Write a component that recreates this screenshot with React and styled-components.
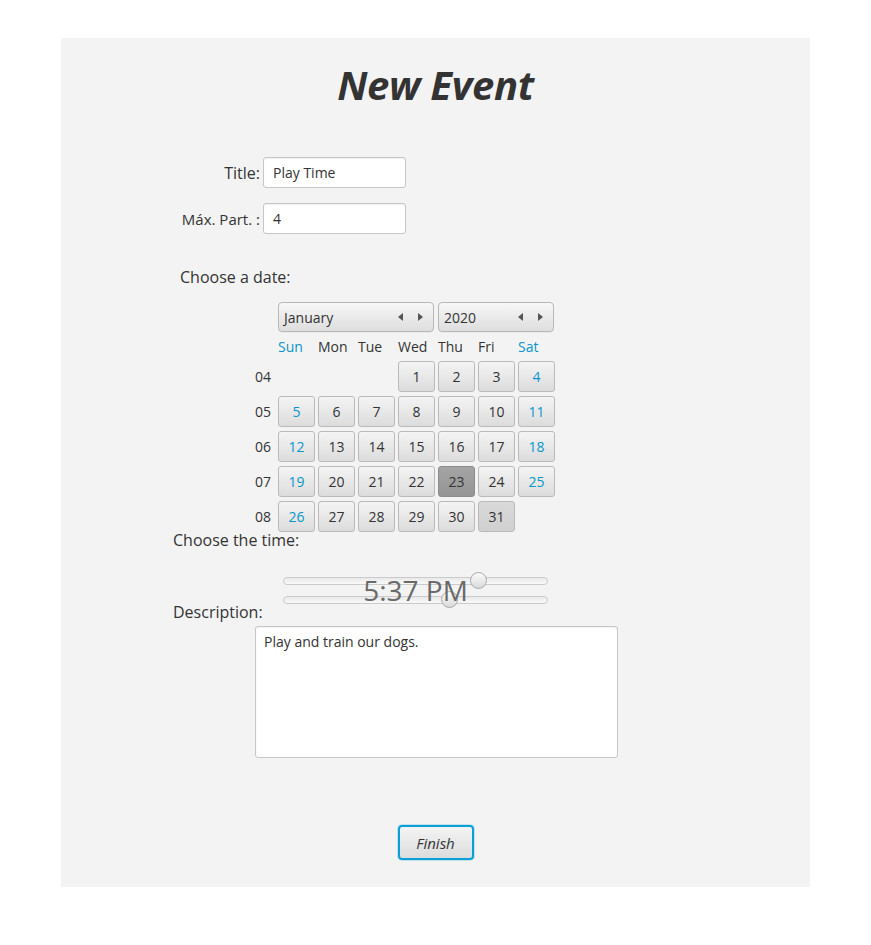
import React from "react";
import styled, { createGlobalStyle } from "styled-components";

const Global = createGlobalStyle`
  html, body { margin: 0; padding: 0; background: #ffffff; }
  body { font-family: "Open Sans", "Noto Sans", sans-serif; color: #333333; }
  * { box-sizing: border-box; }
`;

const Panel = styled.div`
  margin: 38px 0 0 61px;
  width: 749px;
  height: 849px;
  background: #f3f3f3;
  display: flex;
  flex-direction: column;
  align-items: flex-start;
`;

const Heading = styled.h1`
  align-self: stretch;
  margin: 22px 0 0;
  height: 50px;
  line-height: 50px;
  text-align: center;
  font-size: 40px;
  font-weight: 700;
  font-style: italic;
  color: #333333;
  letter-spacing: -0.3px;
`;

const FieldGrid = styled.div`
  margin-top: 47px;
  display: grid;
  grid-template-columns: 199px 143px;
  column-gap: 3px;
  row-gap: 15px;
  align-items: center;
`;

const FieldLabel = styled.label`
  text-align: right;
  font-size: ${(p) => p.$size || 16}px;
  color: #333333;
  white-space: nowrap;
`;

const TextInput = styled.div`
  height: 31px;
  background: #ffffff;
  border: 1px solid #c6c6c6;
  border-radius: 3px;
  box-shadow: inset 0 1px 1px rgba(0, 0, 0, 0.06);
  padding-left: 9px;
  font-size: 14px;
  line-height: 29px;
  color: #333333;
`;

const SectionLabel = styled.div`
  margin-left: ${(p) => p.$indent}px;
  margin-top: ${(p) => p.$top}px;
  height: 20px;
  line-height: 20px;
  font-size: 16px;
  color: #333333;
  white-space: nowrap;
`;

const Calendar = styled.div`
  margin-left: 194px;
  margin-top: 15px;
  display: flex;
  flex-direction: column;
`;

const SpinnerRow = styled.div`
  display: flex;
  gap: 4px;
  margin-left: 23px;
`;

const Spinner = styled.div`
  width: ${(p) => p.$w}px;
  height: 30px;
  border: 1px solid #b8b8b8;
  border-radius: 4px;
  background: linear-gradient(#f7f7f7, #dedede);
  box-shadow: 0 1px 0 rgba(0,0,0,0.04);
  display: flex;
  align-items: center;
  padding: 0 10px 0 5px;
  font-size: 14px;
  color: #333333;
`;

const SpinnerText = styled.span`
  flex: 1;
`;

const Arrows = styled.span`
  display: flex;
  gap: 13px;
  align-items: center;
`;

const Arrow = ({ dir }) => (
  <svg width="6" height="8" viewBox="0 0 6 8">
    {dir === "left" ? (
      <polygon points="5,0 5,8 0,4" fill="#555555" />
    ) : (
      <polygon points="1,0 1,8 6,4" fill="#555555" />
    )}
  </svg>
);

const DayGrid = styled.div`
  margin-top: 5px;
  display: grid;
  grid-template-columns: 20px repeat(7, 37px);
  grid-template-rows: 20px;
  grid-auto-rows: 31px;
  column-gap: 3px;
  row-gap: 4px;
  align-items: center;
`;

const DayHead = styled.div`
  height: 20px;
  line-height: 20px;
  font-size: 14px;
  color: ${(p) => (p.$weekend ? "#0896cc" : "#333333")};
  white-space: nowrap;
`;

const WeekNo = styled.div`
  font-size: 14px;
  color: #333333;
  grid-column: 1;
`;

const DayCell = styled.div`
  height: 31px;
  border-radius: 3px;
  border: 1px solid ${(p) => (p.$selected ? "#8c8c8c" : "#bababa")};
  background: ${(p) =>
    p.$selected
      ? "linear-gradient(#a4a4a4, #959595)"
      : p.$today
      ? "linear-gradient(#d9d9d9, #d0d0d0)"
      : "linear-gradient(#f4f4f4, #dcdcdc)"};
  display: flex;
  align-items: center;
  justify-content: center;
  font-size: 14px;
  color: ${(p) => (p.$weekend ? "#0896cc" : "#333333")};
  grid-column: ${(p) => p.$col};
`;

const TimeBlock = styled.div`
  position: relative;
  margin-left: 222px;
  margin-top: 21px;
  width: 265px;
  display: flex;
  flex-direction: column;
`;

const SliderRow = styled.div`
  position: relative;
  height: 19px;
  display: flex;
  align-items: center;
`;

const Track = styled.div`
  width: 100%;
  height: 8px;
  border: 1px solid #cbcbcb;
  border-radius: 4px;
  background: linear-gradient(#e9e9e9, #f9f9f9);
`;

const Thumb = styled.div`
  position: absolute;
  top: 1px;
  width: 17px;
  height: 17px;
  margin-left: -8.5px;
  border-radius: 50%;
  border: 1px solid #a9a9a9;
  background: linear-gradient(#fbfbfb, #dadada);
`;

const TimeText = styled.div`
  position: absolute;
  left: 0;
  right: 0;
  top: 4px;
  text-align: center;
  font-size: 28px;
  line-height: 30px;
  color: #6a6a6a;
  pointer-events: none;
`;

const TextArea = styled.div`
  margin-left: 194px;
  margin-top: 4px;
  width: 363px;
  height: 132px;
  background: #ffffff;
  border: 1px solid #c6c6c6;
  border-radius: 3px;
  box-shadow: inset 0 1px 2px rgba(0, 0, 0, 0.06);
  padding: 5px 8px;
  font-size: 14px;
  line-height: 20px;
  color: #333333;
`;

const FinishButton = styled.button`
  align-self: center;
  margin-top: 67px;
  width: 76px;
  height: 35px;
  border: 2px solid #0aa0d6;
  border-radius: 4px;
  background: linear-gradient(#f4f4f4, #dcdcdc);
  box-shadow: 0 0 0 1px rgba(10, 160, 214, 0.2);
  font-family: "Open Sans", "Noto Sans", sans-serif;
  font-style: italic;
  font-size: 15px;
  color: #333333;
  padding: 0;
`;

const weekdays = ["Sun", "Mon", "Tue", "Wed", "Thu", "Fri", "Sat"];

function buildWeeks() {
  // January 2020 starts on Wednesday
  const weeks = [];
  let day = 1;
  let wk = 4;
  let col = 3;
  while (day <= 31) {
    const days = [];
    while (col < 7 && day <= 31) {
      days.push({ day, col });
      day++;
      col++;
    }
    weeks.push({ wk: String(wk).padStart(2, "0"), days });
    wk++;
    col = 0;
  }
  return weeks;
}

export default function App() {
  const weeks = buildWeeks();
  const hour = 17;
  const minute = 37;
  const hourPct = (hour / 23) * 100;
  const minPct = (minute / 59) * 100;

  return (
    <>
      <Global />
      <Panel>
        <Heading>New Event</Heading>
        <FieldGrid>
          <FieldLabel>Title:</FieldLabel>
          <TextInput>Play Time</TextInput>
          <FieldLabel $size={15}>Máx. Part. :</FieldLabel>
          <TextInput>4</TextInput>
        </FieldGrid>

        <SectionLabel $indent={119} $top={33}>Choose a date:</SectionLabel>

        <Calendar>
          <SpinnerRow>
            <Spinner $w={156}>
              <SpinnerText>January</SpinnerText>
              <Arrows>
                <Arrow dir="left" />
                <Arrow dir="right" />
              </Arrows>
            </Spinner>
            <Spinner $w={116}>
              <SpinnerText>2020</SpinnerText>
              <Arrows>
                <Arrow dir="left" />
                <Arrow dir="right" />
              </Arrows>
            </Spinner>
          </SpinnerRow>
          <DayGrid>
            <span />
            {weekdays.map((d, i) => (
              <DayHead key={d} $weekend={i === 0 || i === 6}>
                {d}
              </DayHead>
            ))}
            {weeks.map((w) => (
              <React.Fragment key={w.wk}>
                <WeekNo>{w.wk}</WeekNo>
                {w.days.map(({ day, col }) => (
                  <DayCell
                    key={day}
                    $col={col + 2}
                    $weekend={col === 0 || col === 6}
                    $selected={day === 23}
                    $today={day === 31}
                  >
                    {day}
                  </DayCell>
                ))}
              </React.Fragment>
            ))}
          </DayGrid>
        </Calendar>

        <SectionLabel $indent={112} $top={-2}>Choose the time:</SectionLabel>

        <TimeBlock>
          <SliderRow>
            <Track />
            <Thumb style={{ left: `${hourPct}%` }} />
          </SliderRow>
          <SliderRow>
            <Track />
            <Thumb style={{ left: `${minPct}%` }} />
          </SliderRow>
          <TimeText>5:37 PM</TimeText>
        </TimeBlock>

        <SectionLabel $indent={112} $top={-7}>Description:</SectionLabel>
        <TextArea>Play and train our dogs.</TextArea>

        <FinishButton>Finish</FinishButton>
      </Panel>
    </>
  );
}
